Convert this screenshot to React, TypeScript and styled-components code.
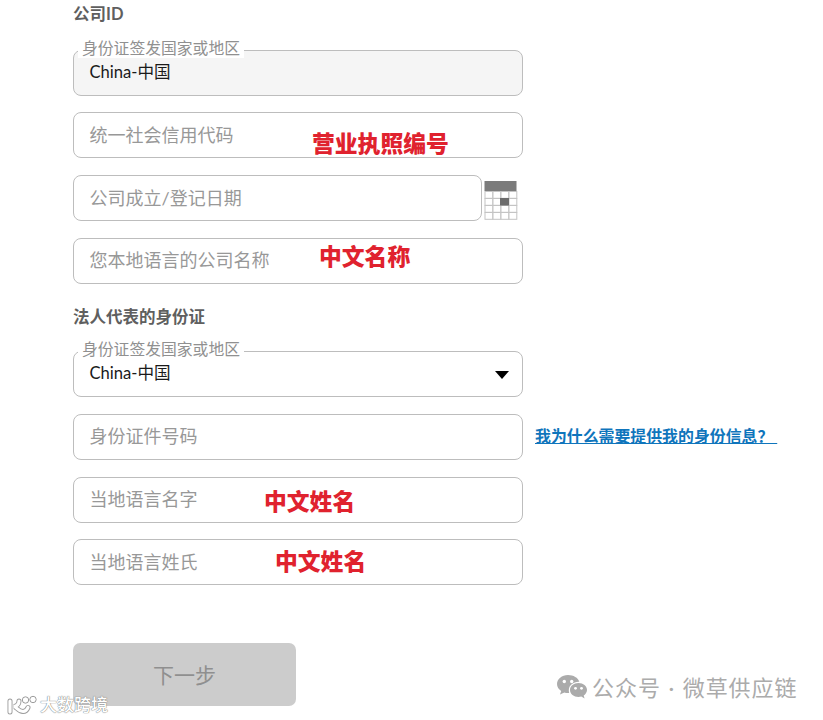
import styled, { createGlobalStyle } from "styled-components";

const FONT = `Lato, "Noto Sans CJK SC", sans-serif`;

function CalendarIcon() {
    const cols = [0, 1, 2, 3];
    const rows = [0, 1, 2, 3];
    return <CalendarSvg width="34" height="39" viewBox="0 0 34 39">
        <rect x="0.5" y="0" width="32" height="10" fill="#7b7b7b" />
        {rows.map(r => cols.map(c =>
            <rect key={r + "-" + c} x={1 + c * 8} y={10.5 + r * 7} width="7.8" height="6.8" fill="#fff" stroke="#c4c4c4" strokeWidth="1" />
        ))}
        <rect x="16" y="17" width="9" height="7.5" fill="#6c6c6c" />
    </CalendarSvg>;
}

function WeChatIcon() {
    return <svg width="31" height="25" viewBox="0 0 31 25">
        <path d="M12 1C5.9 1 1 5 1 10c0 2.9 1.6 5.3 4.2 7L4 20.6l4.3-2.2c1.2.4 2.4.6 3.7.6.4 0 .8 0 1.2-.1-.3-.9-.4-1.800-.4-2.700C12.800 11.300 17.200 7.700 22.600 7.700c.3 0 .5 0 .7.0C22.100 3.800 17.500 1 12 1Z" fill="#ababab" />
        <circle cx="8.300" cy="7.500" r="1.700" fill="#fff" />
        <circle cx="15.700" cy="7.500" r="1.700" fill="#fff" />
        <path d="M22.500 9C17.800 9 14 12.100 14 16s3.800 7 8.500 7c1 0 1.900-.1 2.800-.4l3.300 1.800-.9-2.900c1.900-1.300 3.300-3.300 3.300-5.500 0-3.900-3.800-7-8.500-7Z" fill="#ababab" />
        <circle cx="19.500" cy="14.300" r="1.400" fill="#fff" />
        <circle cx="25.500" cy="14.300" r="1.400" fill="#fff" />
    </svg>;
}

// the K with the two rings above it, white with a thin grey edge
function LogoMark() {
    const k = "M4 6v11M13 6c0 3.500-2.500 5-5 5.500 3 .5 4 5 9 5 2.500 0 4-1.500 5-4";
    return <svg width="32" height="20" viewBox="0 0 32 20" fill="none">
        <path d={k} stroke="#9c9c9c" strokeWidth="5" strokeLinecap="round" />
        <path d={k} stroke="#fff" strokeWidth="3.200" strokeLinecap="round" />
        <circle cx="19.500" cy="5" r="3.200" fill="#fff" stroke="#9c9c9c" strokeWidth="1" />
        <circle cx="27" cy="4.500" r="3.200" fill="#fff" stroke="#9c9c9c" strokeWidth="1" />
    </svg>;
}

function App() {
    return <Page>
        <GlobalStyle />
        <SectionTitle>公司ID</SectionTitle>
        <FieldStack>
            <Field $disabled>
                <FloatLabel>身份证签发国家或地区</FloatLabel>
                <Value>China-中国</Value>
            </Field>
            <Field>
                <Placeholder>统一社会信用代码</Placeholder>
                <Note $left={238} $top={15}>营业执照编号</Note>
            </Field>
            <Row>
                <Field $narrow>
                    <Placeholder>公司成立/登记日期</Placeholder>
                </Field>
                <CalendarIcon />
            </Row>
            <Field>
                <Placeholder $lift>您本地语言的公司名称</Placeholder>
                <Note $left={245} $top={2}>中文名称</Note>
            </Field>
        </FieldStack>

        <SecondTitle>法人代表的身份证</SecondTitle>
        <FieldStack>
            <Field>
                <FloatLabel>身份证签发国家或地区</FloatLabel>
                <Value>China-中国</Value>
                <Caret />
            </Field>
            <Row>
                <Field>
                    <Placeholder $lift>身份证件号码</Placeholder>
                </Field>
                <WhyLink href="#">我为什么需要提供我的身份信息？&nbsp;</WhyLink>
            </Row>
            <Field>
                <Placeholder $lift>当地语言名字</Placeholder>
                <Note $left={190} $top={8}>中文姓名</Note>
            </Field>
            <Field>
                <Placeholder>当地语言姓氏</Placeholder>
                <Note $left={201} $top={6}>中文姓名</Note>
            </Field>
        </FieldStack>

        <NextButton disabled>下一步</NextButton>

        <LeftMark>
            <LogoMark />
            <LeftMarkText>大数跨境</LeftMarkText>
        </LeftMark>
        <RightMark>
            <WeChatIcon />
            <RightMarkText>公众号 · 微草供应链</RightMarkText>
        </RightMark>
    </Page>;
}

const GlobalStyle = createGlobalStyle`
    html, body {
        margin: 0;
        padding: 0;
        background: #fff;
    }
`;

const Page = styled.div`
    position: relative;
    box-sizing: border-box;

    width: 823px;
    height: 720px;
    padding: 3px 0 0 73px;
    overflow: hidden;

    background: #fff;
    font-family: ${FONT};
`;

const SectionTitle = styled.h2`
    margin: 0 0 23.600px;

    font-size: 16.500px;
    line-height: 23px;
    font-weight: 700;
    color: #5f5f5f;
`;

const SecondTitle = styled(SectionTitle)`
    margin: 21.500px 0 22.200px;
`;

const FieldStack = styled.div`
    display: flex;
    flex-direction: column;
    gap: 16.850px;
`;

const Row = styled.div`
    display: flex;
    align-items: center;
`;

const Field = styled.div<{ $disabled?: boolean; $narrow?: boolean }>`
    position: relative;
    box-sizing: border-box;
    flex: none;
    display: flex;
    align-items: center;

    width: ${p => (p.$narrow ? "409px" : "450px")};
    height: 46px;
    padding: 0 15.500px;

    border: 1px solid #bdbdbd;
    border-radius: 8px;
    background: ${p => (p.$disabled ? "#f5f5f5" : "#fff")};
`;

const FloatLabel = styled.span`
    position: absolute;
    top: -13px;
    left: 4px;

    padding: 0 4px;

    background: #fff;
    font-size: 15.800px;
    line-height: 20px;
    color: #909090;
`;

const Value = styled.span`
    margin-bottom: 3px;

    font-size: 16.600px;
    color: #1a1a1a;
`;

const Placeholder = styled.span<{ $lift?: boolean }>`
    margin-bottom: ${p => (p.$lift ? "4px" : "2px")};

    font-size: 18px;
    color: #989898;
`;

const Note = styled.span<{ $left: number; $top: number }>`
    position: absolute;
    left: ${p => p.$left}px;
    top: ${p => p.$top}px;

    font-size: 22.800px;
    line-height: 30px;
    font-weight: 900;
    color: #e0222e;
    white-space: nowrap;
`;

const Caret = styled.span`
    position: absolute;
    right: 13px;
    top: 19px;

    width: 0;
    height: 0;

    border-left: 7px solid transparent;
    border-right: 7px solid transparent;
    border-top: 8px solid #000;
`;

const CalendarSvg = styled.svg`
    flex: none;
    margin: 4px 0 0 2px;
`;

const WhyLink = styled.a`
    margin: 0 0 2px 12px;

    font-size: 15.900px;
    font-weight: 700;
    color: #0f75bc;
    text-decoration: underline;
    white-space: nowrap;
`;

const NextButton = styled.button`
    display: block;

    width: 223px;
    height: 63px;
    margin-top: 57.600px;
    padding: 0;

    border: 0;
    border-radius: 7px;
    background: #cccccc;
    font-family: ${FONT};
    font-size: 21px;
    color: #8f8f8f;
`;

const LeftMark = styled.div`
    position: absolute;
    left: 6px;
    bottom: 5px;

    display: flex;
    align-items: flex-end;
    gap: 2px;
`;

const LeftMarkText = styled.span`
    font-size: 17px;
    line-height: 20px;
    font-weight: 500;
    color: #fff;
    text-shadow: 0 0 1px #777, 0 0 1px #777;
`;

const RightMark = styled.div`
    position: absolute;
    left: 556px;
    top: 670px;

    display: flex;
    align-items: center;
    gap: 5px;
`;

const RightMarkText = styled.span`
    font-size: 22px;
    letter-spacing: 0.950px;
    word-spacing: 1px;
    color: #ababab;
    white-space: nowrap;
`;

export default App;
